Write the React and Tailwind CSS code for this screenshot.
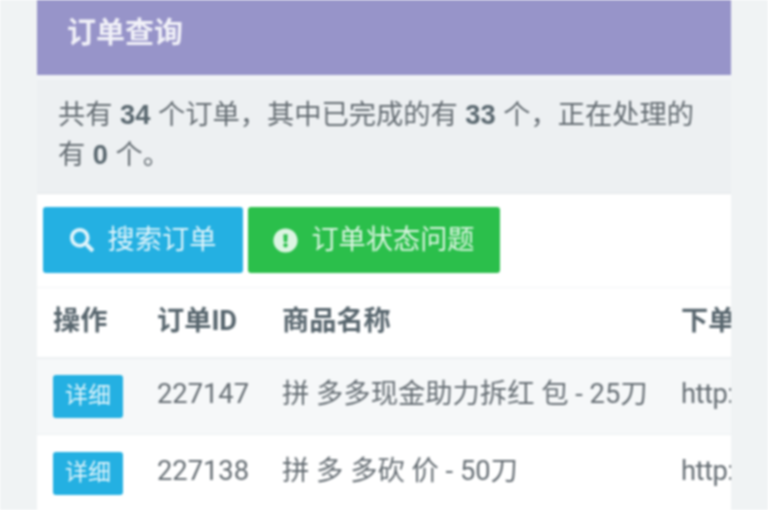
import React from 'react';
import { FaSearch, FaExclamationCircle } from 'react-icons/fa';

const orders = [
  { id: '227147', name: '拼 多多现金助力拆红 包 - 25刀', link: 'http://pinduoduo.com', striped: true },
  { id: '227138', name: '拼 多 多砍 价 - 50刀', link: 'http://pinduoduo.com', striped: false },
];

export default function App() {
  return (
    <div className="h-[510px] w-[768px] overflow-hidden bg-[#f0f3f4] font-['Roboto','Noto_Sans_CJK_SC',sans-serif] blur-[0.8px]">
      <div className="ml-[37px] h-full w-[694px] bg-white">
        <div className="flex h-[75px] items-center bg-[#9794c9] pb-[7px] pl-[30px] text-[29px] font-bold text-[#f1f1f8]">
          订单查询
        </div>

        <div className="h-[119px] border-t-[5px] border-b border-t-[#f1f3f6] border-b-[#e3e6e8] bg-[#edf0f2] px-[21px] pt-[15px] font-['Liberation_Sans','Noto_Sans_CJK_SC',sans-serif] text-[27.25px] leading-[40px] text-[#646c72]">
          共有 <b className="text-[#58666e]">34</b> 个订单，其中已完成的有 <b className="text-[#58666e]">33</b> 个，正在处理的有 <b className="text-[#58666e]">0</b> 个。
        </div>

        <div className="flex gap-[5px] pl-[6px] pt-[13px]">
          <button className="flex h-[66px] w-[200px] items-center justify-center gap-[14px] rounded-[3px] bg-[#24b0e2] text-[27.2px] text-[#dff4fb]">
            <FaSearch className="text-[24px]" />
            搜索订单
          </button>
          <button className="flex h-[66px] w-[252px] items-center justify-center gap-[13px] rounded-[3px] bg-[#2bbf4b] text-[27.2px] text-[#dcf5e2]">
            <FaExclamationCircle className="text-[25px]" />
            订单状态问题
          </button>
        </div>

        <table className="mt-[14px] w-[694px] table-fixed border-t border-[#f3f5f6] text-left text-[#666e74]">
          <colgroup>
            <col className="w-[120px]" />
            <col className="w-[125px]" />
            <col className="w-[399px]" />
            <col className="w-[50px]" />
          </colgroup>
          <thead>
            <tr className="h-[70px] border-b-2 border-[#edf0f2] text-[27.2px] text-[#58666e]">
              <th className="pb-[2px] pl-[16px] font-bold">操作</th>
              <th className="whitespace-nowrap pb-[2px] font-bold">订单ID</th>
              <th className="pb-[2px] font-bold">商品名称</th>
              <th className="overflow-hidden whitespace-nowrap pb-[2px] font-bold">下单时间</th>
            </tr>
          </thead>
          <tbody>
            {orders.map((order) => (
              <tr
                key={order.id}
                className={`h-[77px] border-b border-[#edf0f2] text-[27.3px] ${order.striped ? 'bg-[#f6f8f9]' : 'bg-white'}`}
              >
                <td className="pl-[16px]">
                  <span className="flex h-[43px] w-[70px] items-center justify-center rounded-[3px] bg-[#24b0e2] text-[23px] text-[#dff4fb]">
                    详细
                  </span>
                </td>
                <td className="pb-[3px]">{order.id}</td>
                <td className="whitespace-nowrap pb-[3px]">{order.name}</td>
                <td className="overflow-hidden whitespace-nowrap pb-[3px] tracking-[-0.5px]">{order.link}</td>
              </tr>
            ))}
          </tbody>
        </table>
      </div>
    </div>
  );
}
